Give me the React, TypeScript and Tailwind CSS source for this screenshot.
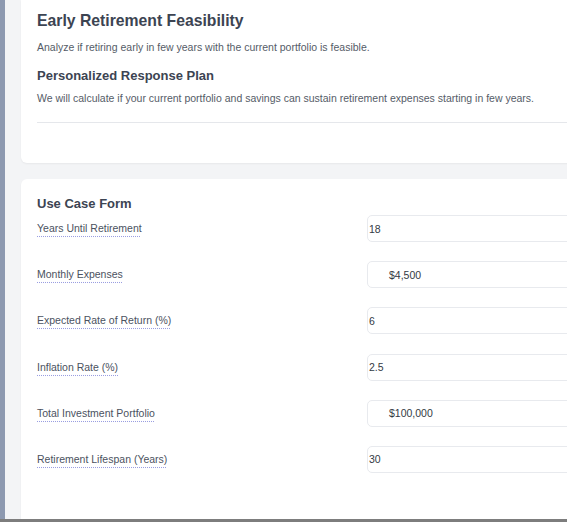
import React from 'react';

const fields = [
  { label: 'Years Until Retirement', value: '18', money: false },
  { label: 'Monthly Expenses', value: '$4,500', money: true },
  { label: 'Expected Rate of Return (%)', value: '6', money: false },
  { label: 'Inflation Rate (%)', value: '2.5', money: false },
  { label: 'Total Investment Portfolio', value: '$100,000', money: true },
  { label: 'Retirement Lifespan (Years)', value: '30', money: false },
];

export default function App() {
  return (
    <div
      className="flex h-[522px] w-[567px] flex-col overflow-hidden bg-[#f3f4f6]"
      style={{ fontFamily: '"Liberation Sans", Arial, sans-serif' }}
    >
      <div className="flex min-h-0 flex-1">
        <div className="w-[5px] shrink-0 bg-[#8d99b0]" />
        <div className="min-w-0 flex-1 overflow-hidden pl-[16px]">
          {/* Intro card */}
          <div className="w-[620px] rounded-b-[6px] bg-white px-[16px] pb-[40px] pt-[11px] shadow-[0_1px_2px_rgba(0,0,0,0.05)]">
            <h1 className="text-[15.75px] font-bold leading-[20px] text-[#3c4452]">
              Early Retirement Feasibility
            </h1>
            <p className="mt-[9px] text-[10.5px] leading-[15px] text-[#555c67]">
              Analyze if retiring early in few years with the current portfolio is feasible.
            </p>
            <h2 className="mt-[12px] text-[13px] font-bold leading-[17px] text-[#3c4452]">
              Personalized Response Plan
            </h2>
            <p className="mt-[7px] text-[10.5px] leading-[15px] text-[#555c67]">
              We will calculate if your current portfolio and savings can sustain retirement expenses starting in few years.
            </p>
            <div className="mt-[16px] h-px bg-[#e5e7eb]" />
          </div>

          {/* Form card */}
          <div className="mt-[16px] w-[620px] rounded-t-[6px] bg-white px-[16px] pb-[80px] pt-[16px] shadow-[0_1px_2px_rgba(0,0,0,0.05)]">
            <h2 className="text-[13px] font-bold leading-[17px] text-[#3c4452]">Use Case Form</h2>
            <div className="mt-[3px] flex flex-col gap-[19.2px]">
              {fields.map((f) => (
                <div key={f.label} className="flex h-[27px] items-center">
                  <div className="w-[330px] shrink-0 pb-[1px] text-[10.5px] leading-[14px]">
                    <span className="text-[#4b5260] underline decoration-[#9a9ee0] decoration-dotted underline-offset-[4px]">
                      {f.label}
                    </span>
                  </div>
                  <div
                    className={`flex h-[27px] flex-1 items-center rounded-[5px] border border-[#e8eaee] bg-white text-[10.5px] leading-[14px] text-[#333a44] ${
                      f.money ? 'pl-[21px]' : 'pl-[1px]'
                    }`}
                  >
                    {f.value}
                  </div>
                </div>
              ))}
            </div>
          </div>
        </div>
      </div>
      <div className="h-[3px] shrink-0 bg-[#7d7d7d]" />
    </div>
  );
}
